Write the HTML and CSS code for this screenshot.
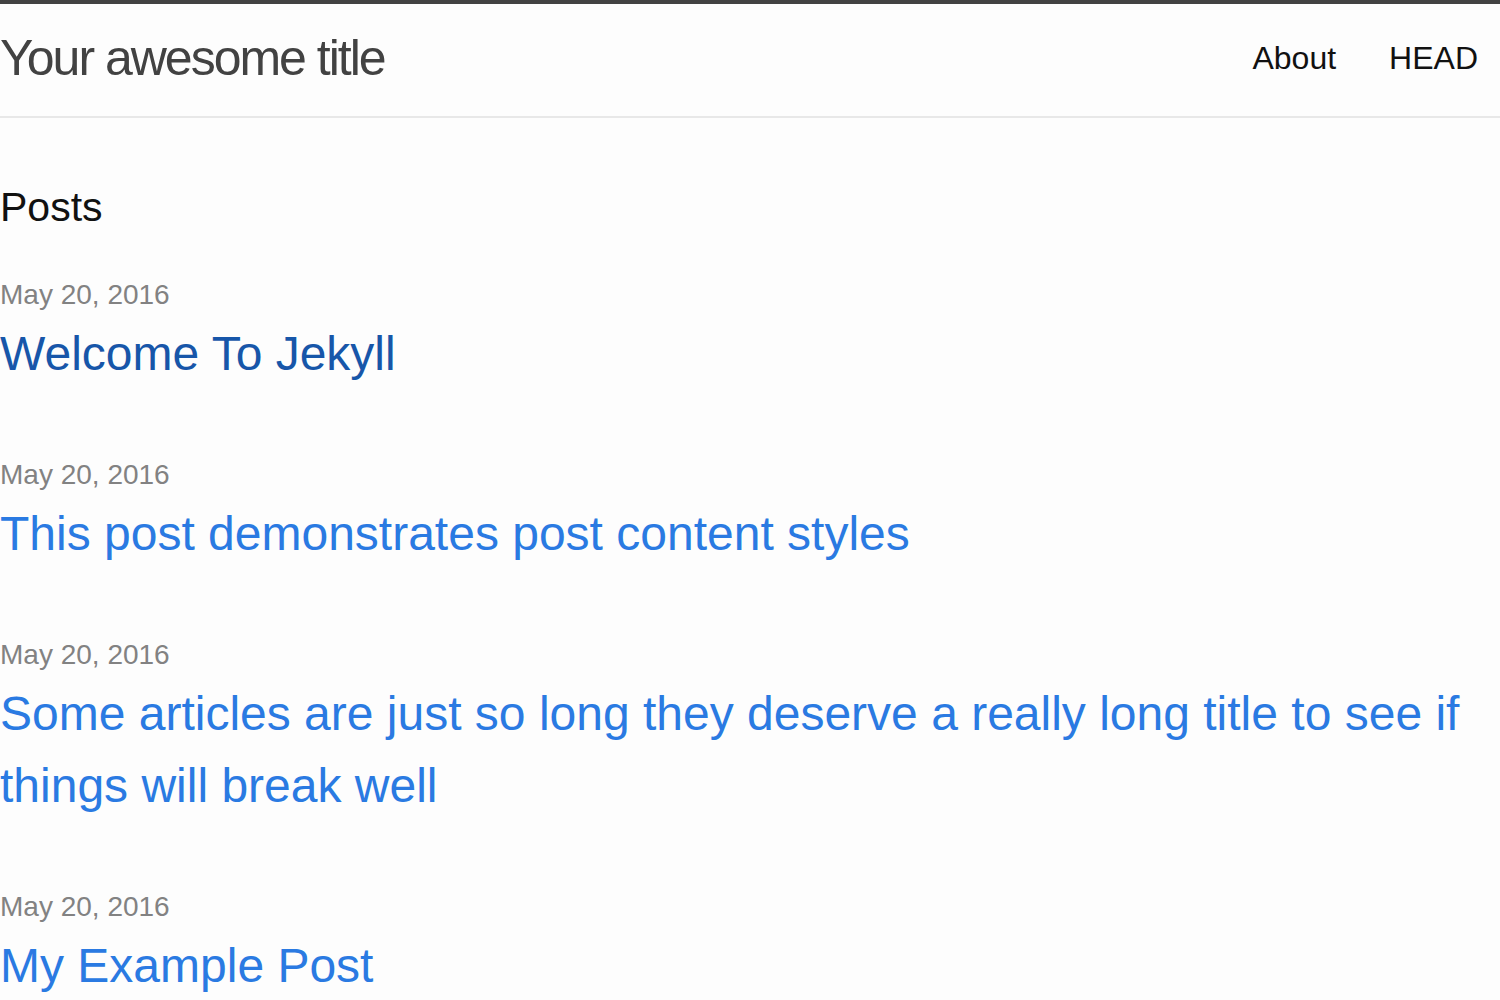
FILE: index.html
```html
<!DOCTYPE html>
<html lang="en">
<head>
<meta charset="utf-8">
<title>Your awesome title</title>
<link rel="stylesheet" href="styles.css">
</head>
<body>
<header class="site-header">
  <div class="wrapper header-inner">
    <a class="site-title" href="#">Your awesome title</a>
    <nav class="site-nav">
      <a class="page-link" href="#">About</a>
      <a class="page-link" href="#">HEAD</a>
    </nav>
  </div>
</header>
<main class="page-content">
  <div class="wrapper">
    <h1 class="post-list-heading">Posts</h1>
    <ul class="post-list">
      <li>
        <span class="post-meta">May 20, 2016</span>
        <h3 class="post-title"><a class="post-link visited" href="#">Welcome To Jekyll</a></h3>
      </li>
      <li>
        <span class="post-meta">May 20, 2016</span>
        <h3 class="post-title"><a class="post-link" href="#">This post demonstrates post content styles</a></h3>
      </li>
      <li>
        <span class="post-meta">May 20, 2016</span>
        <h3 class="post-title"><a class="post-link" href="#">Some articles are just so long they deserve a really long title to see if things will break well</a></h3>
      </li>
      <li>
        <span class="post-meta">May 20, 2016</span>
        <h3 class="post-title"><a class="post-link" href="#">My Example Post</a></h3>
      </li>
    </ul>
  </div>
</main>
</body>
</html>
```
FILE: styles.css
```css
html, body {
  margin: 0;
  padding: 0;
}
body {
  background: #fdfdfd;
  color: #111111;
  font-family: "Liberation Sans", Arial, sans-serif;
  font-size: 32px;
  line-height: 1.5;
}
a {
  text-decoration: none;
}
.wrapper {
  padding: 0 22px 0 0;
}
.site-header {
  border-top: 4px solid #424242;
  border-bottom: 2px solid #e8e8e8;
}
.header-inner {
  display: flex;
  justify-content: space-between;
  align-items: flex-start;
  height: 112px;
}
.site-title {
  font-size: 50px;
  letter-spacing: -2px;
  color: #424242;
  font-weight: 300;
  line-height: 108px;
}
.site-nav {
  display: flex;
  gap: 53px;
  line-height: 108px;
}
.page-link {
  color: #111111;
  font-size: 32px;
}
.page-content {
  padding-top: 59px;
}
.post-list-heading {
  font-size: 41px;
  font-weight: 400;
  margin: 0 0 37px 0;
  line-height: 60px;
}
.post-list {
  list-style: none;
  margin: 0;
  padding: 0;
}
.post-list li {
  margin-bottom: 64px;
}
.post-meta {
  display: block;
  font-size: 28px;
  color: #828282;
  line-height: 42px;
}
.post-title {
  margin: 2px 0 0 0;
  font-size: 48px;
  font-weight: 400;
  line-height: 72px;
}
.post-link {
  color: #2a7ae2;
}
.post-link.visited {
  color: #1756a9;
}
```
